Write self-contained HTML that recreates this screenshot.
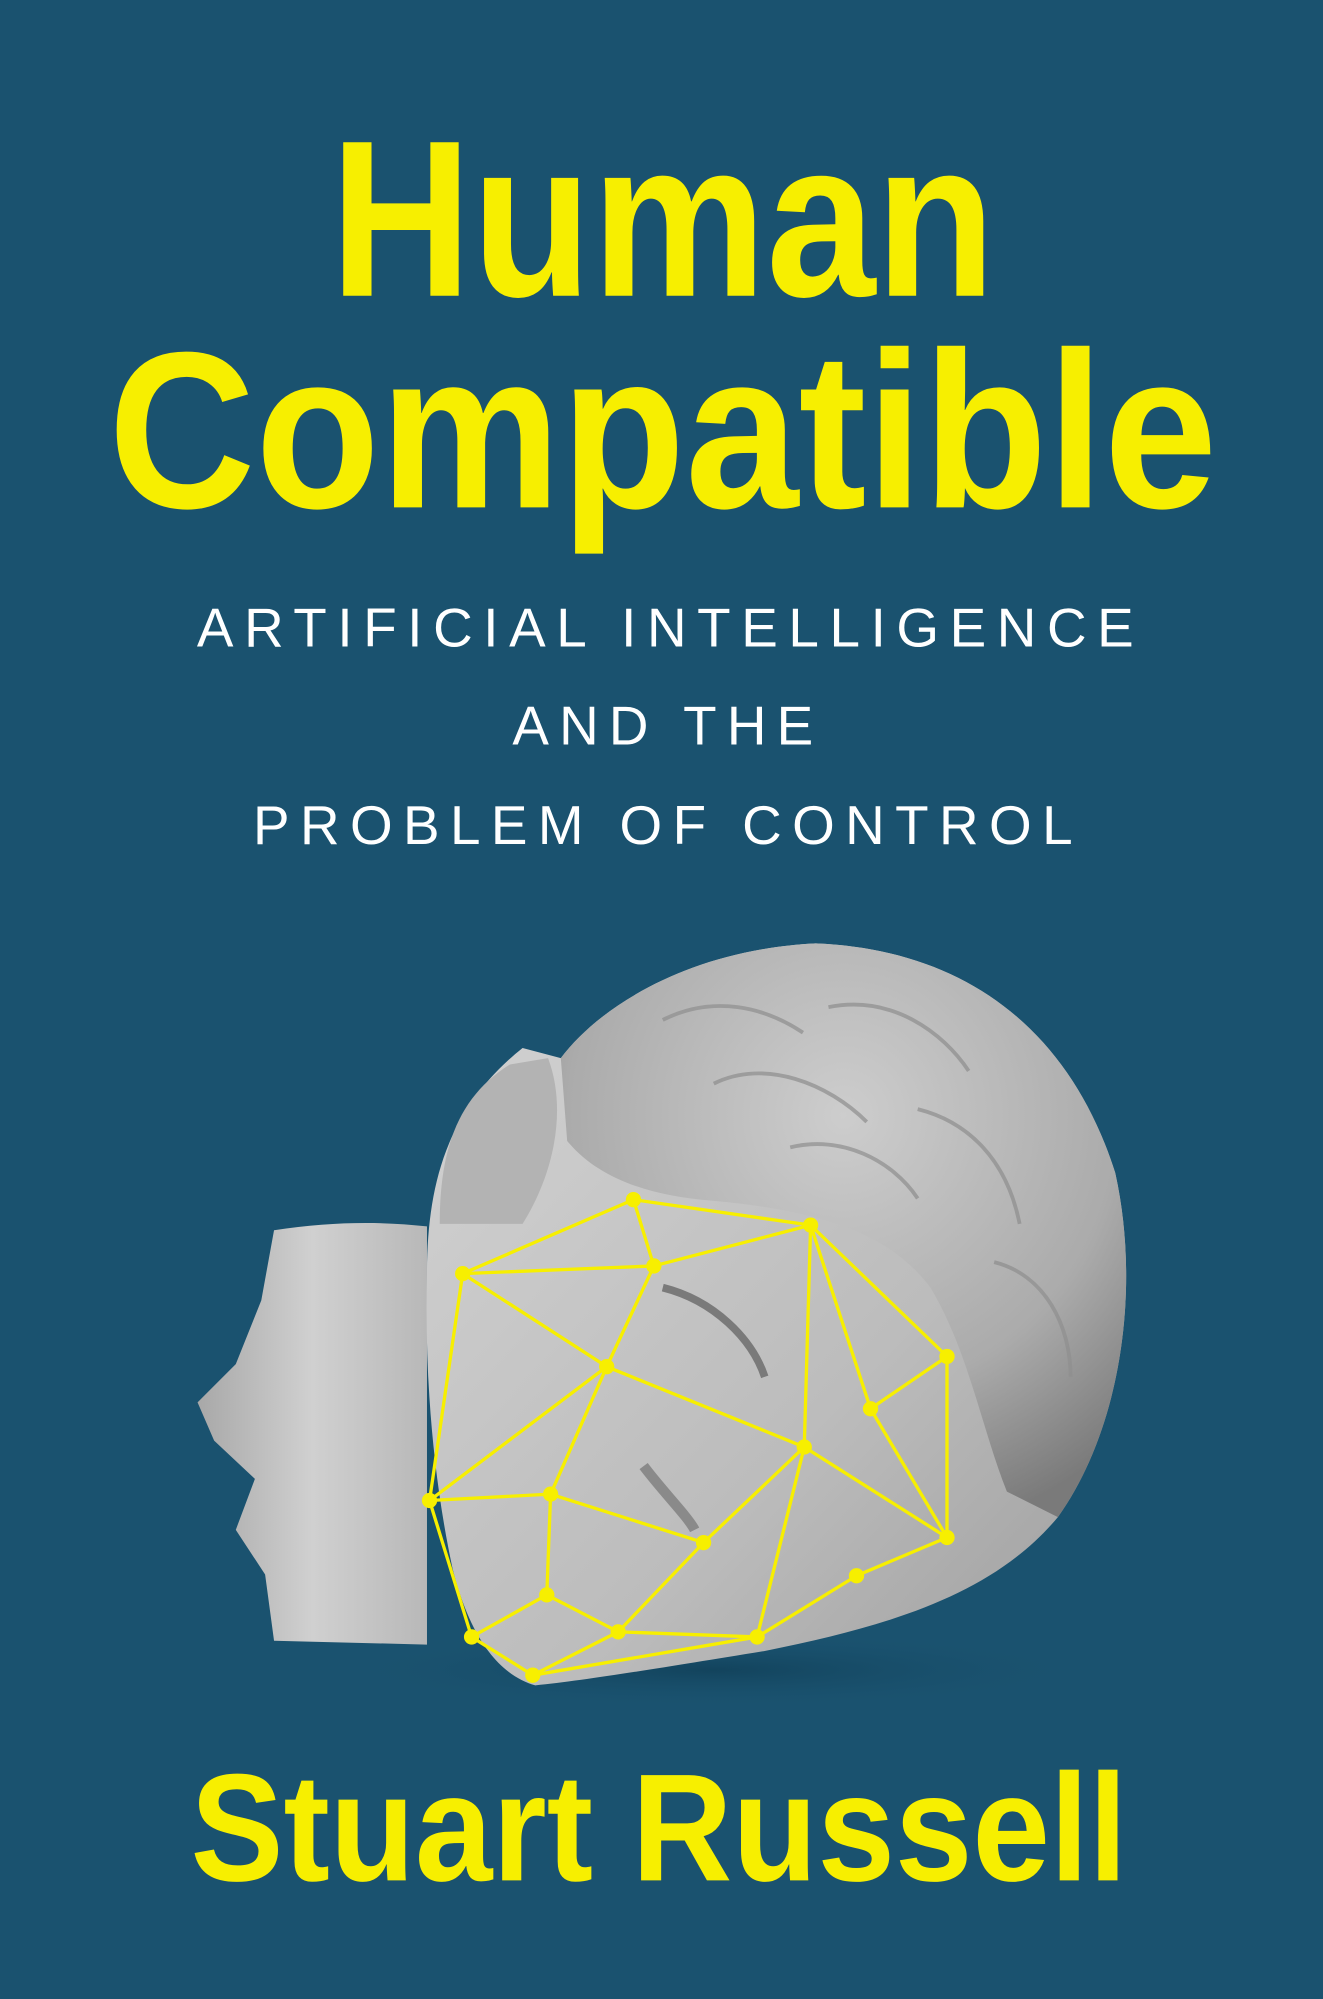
<!DOCTYPE html>
<html><head><meta charset="utf-8"><style>
html,body{margin:0;padding:0;background:#1a526f;}
svg{display:block;}
</style></head><body>
<svg width="1323" height="1999" viewBox="0 0 1038 1568" preserveAspectRatio="none" xmlns="http://www.w3.org/2000/svg">
<defs>
<radialGradient id="hair" cx="0.5" cy="0.3" r="0.75">
<stop offset="0" stop-color="#cdcdcd"/><stop offset="0.65" stop-color="#ababab"/><stop offset="1" stop-color="#7a7a7a"/>
</radialGradient>
<linearGradient id="face" x1="0" y1="0" x2="1" y2="1">
<stop offset="0" stop-color="#d4d4d4"/><stop offset="0.6" stop-color="#bcbcbc"/><stop offset="1" stop-color="#9c9c9c"/>
</linearGradient>
<linearGradient id="neck" x1="0" y1="0" x2="1" y2="0">
<stop offset="0" stop-color="#a8a8a8"/><stop offset="0.5" stop-color="#d0d0d0"/><stop offset="1" stop-color="#b8b8b8"/>
</linearGradient>
<radialGradient id="sh" cx="0.5" cy="0.5" r="0.5">
<stop offset="0" stop-color="#0f3d55" stop-opacity="0.7"/><stop offset="1" stop-color="#1a526f" stop-opacity="0"/>
</radialGradient>
</defs>
<rect width="1038" height="1568" fill="#1a526f"/>
<g font-family="Liberation Sans, Arial, sans-serif" text-anchor="middle">
<text x="520" y="232" font-size="175" font-weight="bold" fill="#f7ef00" textLength="522" lengthAdjust="spacingAndGlyphs">Human</text>
<text x="520" y="398" font-size="175" font-weight="bold" fill="#f7ef00" textLength="870" lengthAdjust="spacingAndGlyphs">Compatible</text>
<text x="522" y="507" font-size="43" fill="#ffffff" textLength="735" lengthAdjust="spacing">ARTIFICIAL INTELLIGENCE</text>
<text x="520" y="584" font-size="43" fill="#ffffff" textLength="236" lengthAdjust="spacing">AND THE</text>
<text x="520" y="662" font-size="43" fill="#ffffff" textLength="643" lengthAdjust="spacing">PROBLEM OF CONTROL</text>
<text x="517" y="1475" font-size="120" font-weight="bold" fill="#f7ef00" textLength="735" lengthAdjust="spacingAndGlyphs">Stuart Russell</text>
</g>
<ellipse cx="560" cy="1310" rx="300" ry="30" fill="url(#sh)"/>
<path d="M215,965 C260,958 300,958 335,962 L335,1290 L215,1287 L208,1235 L185,1200 L200,1160 L168,1130 L155,1100 L185,1070 L205,1020 Z" fill="url(#neck)"/>
<path d="M335,1000 C335,930 350,870 410,822 L440,830 C470,790 540,745 640,740 C760,745 840,810 875,920 C895,1010 880,1120 830,1190 C780,1250 700,1275 600,1295 C520,1308 460,1318 420,1322 C395,1315 370,1290 355,1230 C340,1160 333,1080 335,1000 Z" fill="url(#face)"/>
<path d="M440,830 C470,790 540,745 640,740 C760,745 840,810 875,920 C895,1010 880,1120 830,1190 L790,1170 C770,1120 760,1060 730,1010 C700,970 650,950 560,942 C510,938 470,925 445,895 Z" fill="url(#hair)"/>
<path d="M345,960 C345,900 360,860 400,835 L430,830 C445,870 435,920 410,960 Z" fill="#b3b3b3"/>
<path d="M520,1010 C560,1020 590,1050 600,1080" stroke="#7a7a7a" stroke-width="6" fill="none"/>
<path d="M505,1150 C520,1170 540,1190 545,1200" stroke="#8a8a8a" stroke-width="8" fill="none"/>
<g stroke="#8e8e8e" stroke-width="3" fill="none" opacity="0.7">
<path d="M520,800 C560,780 600,790 630,810"/><path d="M650,790 C700,780 740,810 760,840"/><path d="M560,850 C600,830 650,850 680,880"/><path d="M720,870 C760,880 790,910 800,960"/><path d="M780,990 C820,1000 840,1040 840,1080"/><path d="M620,900 C660,890 700,910 720,940"/>
</g>
<g stroke="#f7ef00" stroke-width="2.6" fill="none">
<path d="M497,941L636,961M497,941L363,999M497,941L513,993M363,999L513,993M513,993L636,961M363,999L476,1072M363,999L337,1177M513,993L476,1072M636,961L631,1135M636,961L683,1105M636,961L743,1064M743,1064L683,1105M743,1064L743,1206M683,1105L743,1206M476,1072L631,1135M476,1072L337,1177M476,1072L432,1172M631,1135L552,1210M631,1135L594,1284M631,1135L743,1206M337,1177L432,1172M337,1177L370,1284M432,1172L552,1210M432,1172L429,1251M552,1210L485,1280M429,1251L485,1280M429,1251L370,1284M370,1284L418,1314M485,1280L594,1284M418,1314L485,1280M418,1314L594,1284M594,1284L672,1236M672,1236L743,1206"/>
</g>
<g fill="#f7ef00">
<circle cx="497" cy="941" r="6"/><circle cx="636" cy="961" r="6"/><circle cx="363" cy="999" r="6"/><circle cx="513" cy="993" r="6"/><circle cx="743" cy="1064" r="6"/><circle cx="476" cy="1072" r="6"/><circle cx="683" cy="1105" r="6"/><circle cx="631" cy="1135" r="6"/><circle cx="337" cy="1177" r="6"/><circle cx="432" cy="1172" r="6"/><circle cx="552" cy="1210" r="6"/><circle cx="743" cy="1206" r="6"/><circle cx="672" cy="1236" r="6"/><circle cx="429" cy="1251" r="6"/><circle cx="370" cy="1284" r="6"/><circle cx="485" cy="1280" r="6"/><circle cx="594" cy="1284" r="6"/><circle cx="418" cy="1314" r="6"/>
</g>
</svg>
</body></html>
